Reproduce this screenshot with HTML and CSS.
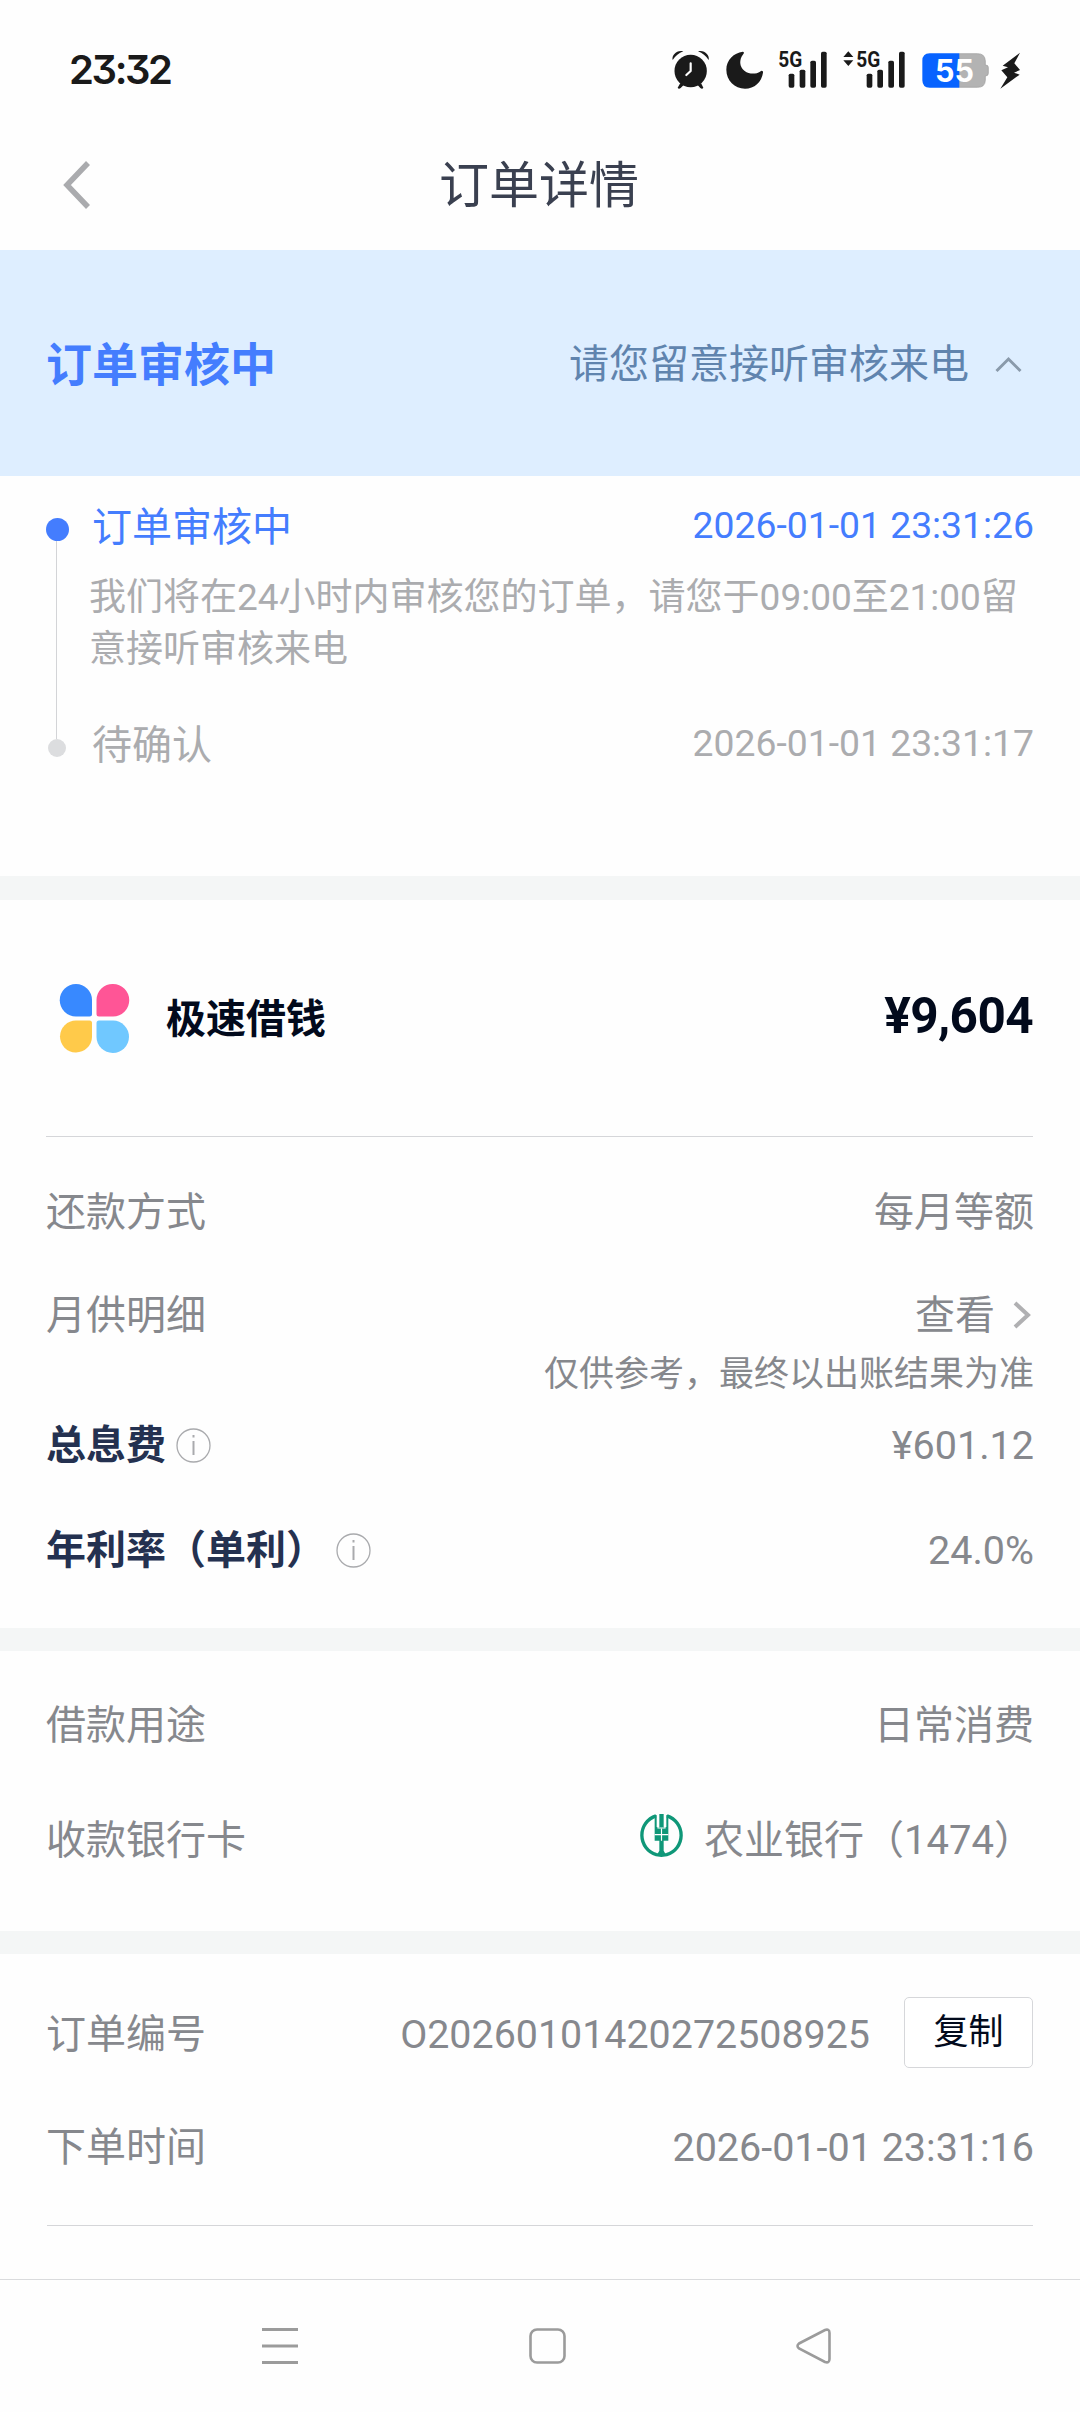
FILE: index.html
```html
<!DOCTYPE html>
<html lang="zh-CN">
<head>
<meta charset="utf-8">
<title>订单详情</title>
<link rel="stylesheet" href="styles.css">
</head>
<body>
<div class="screen">
  <div class="statusbar">
    <span class="clock">23:32</span>
    <div class="status-icons">
      <svg class="ic-alarm" width="38" height="39" viewBox="96 61 114 117">
        <g fill="#1a1a1a">
          <path d="M98 91C94 76 112 59 130 65Q110 73 98 91Z"/>
          <path d="M206 91C210 76 192 59 174 65Q194 73 206 91Z"/>
          <circle cx="152" cy="124" r="48.500"/>
          <path d="M121 160L113 174Q116 180 122 175L131 166ZM183 160L190 174Q187 180 181 175L173 166Z"/>
        </g>
        <path d="M152 101V124L139 136" fill="none" stroke="#fff" stroke-width="6.500" stroke-linecap="round" stroke-linejoin="round"/>
      </svg>
      <svg class="ic-moon" width="38" height="39" viewBox="259 61 114 117">
        <path d="M309 66C283 69 260 91 260 120C260 152 285 177 316 177C344 177 366 157 370 129C371 123 366 121 361 126C351 133 329 135 315 124C298 111 299 90 309 76C314 70 314 66 309 66Z" fill="#1a1a1a"/>
      </svg>
      <svg class="ic-signal" width="48" height="39" viewBox="417 61 144 117">
        <text class="net" x="415" y="111" textLength="72" lengthAdjust="spacingAndGlyphs">5G</text>
        <g fill="#1a1a1a"><rect x="446" y="132" width="17" height="42" rx="5"/><rect x="479" y="120" width="17" height="54" rx="5"/><rect x="511" y="93" width="17" height="81" rx="5"/><rect x="543" y="66" width="17" height="108" rx="5"/></g>
      </svg>
      <svg class="ic-signal2" width="62" height="39" viewBox="609 61 186 117">
        <path d="M625 65L640 82H610ZM625 109L640 92H610Z" fill="#1a1a1a"/>
        <text class="net" x="649" y="111" textLength="72" lengthAdjust="spacingAndGlyphs">5G</text>
        <g fill="#1a1a1a"><rect x="680" y="132" width="17" height="42" rx="5"/><rect x="712" y="120" width="17" height="54" rx="5"/><rect x="745" y="93" width="17" height="81" rx="5"/><rect x="777" y="66" width="17" height="108" rx="5"/></g>
      </svg>
      <svg class="ic-battery" width="67" height="39" viewBox="845 61 201 117">
        <path d="M957 72H1012Q1034 72 1035 94V106Q1044 106 1044 113V131Q1044 139 1035 139V152Q1034 173 1012 173H957Z" fill="#b3b3b3" stroke="#9c9c9c" stroke-width="2"/>
        <path d="M957 71H868Q846 71 846 94V151Q846 174 868 174H957Z" fill="#0763ff"/>
        <text class="level" x="884" y="158" textLength="117" lengthAdjust="spacingAndGlyphs">55</text>
      </svg>
      <svg class="ic-bolt" width="21" height="39" viewBox="1079 61 63 117">
        <path d="M1139 69L1087 108L1103 113L1083 122L1101 143L1080 177L1138 135L1121 129L1139 121L1122 101Z" fill="#1a1a1a"/>
      </svg>
    </div>
  </div>

  <header class="navbar">
    <svg class="back" width="28" height="48" viewBox="0 0 28 48"><path d="M25 2L4 24L25 46" fill="none" stroke="#aaabae" stroke-width="5.500"/></svg>
    <h1 class="title">订单详情</h1>
  </header>

  <section class="banner">
    <strong class="banner-state">订单审核中</strong>
    <span class="banner-tip">请您留意接听审核来电</span>
    <svg class="banner-arrow" width="27" height="17" viewBox="0 0 27 17"><path d="M1.500 15L13.500 3L25.500 15" fill="none" stroke="#8a9aab" stroke-width="3"/></svg>
  </section>

  <section class="timeline">
    <div class="rail"><i class="dot dot-on"></i><i class="rail-line"></i><i class="dot dot-off"></i></div>
    <div class="steps">
      <div class="step step-on"><span>订单审核中</span><time>2026-01-01 23:31:26</time></div>
      <p class="step-desc">我们将在24小时内审核您的订单，请您于09:00至21:00留意接听审核来电</p>
      <div class="step"><span>待确认</span><time>2026-01-01 23:31:17</time></div>
    </div>
  </section>

  <section class="card loan">
    <div class="product">
      <svg class="logo" width="69" height="69" viewBox="0 0 69 69">
        <path d="M16 0A16 16 0 0 1 32 16V30Q32 32.500 29.500 32.500H16A16.250 16.250 0 0 1 16 0Z" fill="#3889ff"/>
        <path d="M53 0A16.250 16.250 0 0 1 53 32.500H39Q36.500 32.500 36.500 30V16A16 16 0 0 1 53 0Z" fill="#ff5596"/>
        <path d="M16 36.500H29.500Q32 36.500 32 39V53A16 16 0 1 1 16 36.500Z" fill="#ffca4a"/>
        <path d="M39 36.500H53A16.250 16.250 0 1 1 36.500 53V39Q36.500 36.500 39 36.500Z" fill="#70c8ff"/>
      </svg>
      <strong class="product-name">极速借钱</strong>
      <strong class="amount">¥9,604</strong>
    </div>
    <div class="rows">
      <div class="row r1"><span>还款方式</span><span>每月等额</span></div>
      <div class="row r2"><span>月供明细</span><span class="more">查看<svg width="18" height="28" viewBox="0 0 18 28"><path d="M2 2L15 14L2 26" fill="none" stroke="#b0b0b2" stroke-width="4"/></svg></span></div>
      <div class="note">仅供参考，最终以出账结果为准</div>
      <div class="row r3"><span class="key">总息费<svg width="35" height="35" viewBox="0 0 35 35"><circle cx="17.500" cy="17.500" r="16.500" fill="none" stroke="#a9aaad" stroke-width="1.300"/><path d="M17.500 7V9.500M17.500 13V27" stroke="#a9aaad" stroke-width="2"/></svg></span><span class="num">¥601.12</span></div>
      <div class="row r4"><span class="key">年利率（单利）<svg width="35" height="35" viewBox="0 0 35 35"><circle cx="17.500" cy="17.500" r="16.500" fill="none" stroke="#a9aaad" stroke-width="1.300"/><path d="M17.500 7V9.500M17.500 13V27" stroke="#a9aaad" stroke-width="2"/></svg></span><span class="num">24.0%</span></div>
    </div>
  </section>

  <section class="card payee">
    <div class="row"><span>借款用途</span><span>日常消费</span></div>
    <div class="row bank-row"><span>收款银行卡</span>
      <span class="bank">
        <svg class="bank-logo" width="43" height="43" viewBox="0 0 129 129">
          <path d="M48 5.500A61 61 0 0 0 49 122L64 124L80 122A61 61 0 0 0 81 5.500" fill="none" stroke="#0f9778" stroke-width="10"/>
          <path d="M44 3H50V39H58V0H71V39H79V3H85V80H71V110L78 122H51L58 110V80H44Z" fill="#0f9778"/>
          <path d="M54 0V42H75V0M44 62H85M64.500 44V80" fill="none" stroke="#fff" stroke-width="3.500"/>
        </svg>农业银行（1474）</span></div>
  </section>

  <section class="card order">
    <div class="row id-row"><span>订单编号</span><span class="order-id">O20260101420272508925</span><button class="copy">复制</button></div>
    <div class="row time-row"><span>下单时间</span><span class="num">2026-01-01 23:31:16</span></div>
    <hr class="rule">
  </section>

  <nav class="sysnav">
    <svg width="36" height="38" viewBox="0 0 36 38"><path d="M0 2.500H36M0 19H36M0 35.500H36" stroke="#9b9b9b" stroke-width="3"/></svg>
    <svg width="38" height="38" viewBox="0 0 38 38"><rect x="2.500" y="2.500" width="34" height="33" rx="6.500" fill="none" stroke="#9b9b9b" stroke-width="2.600"/></svg>
    <svg width="36" height="38" viewBox="0 0 36 38"><path d="M3 16.500L29 3Q33.500 1.500 33.500 6V32Q33.500 36.500 29 35L3 21.500Q0 19 3 16.500Z" fill="none" stroke="#9b9b9b" stroke-width="2.600"/></svg>
  </nav>
</div>
</body>
</html>
```
FILE: styles.css
```css
* { box-sizing: border-box; }
body {
  margin: 0;
  background: #fefefe;
  font-family: Roboto, "Noto Sans CJK SC", sans-serif;
  font-size: 40px;
  color: #86888d;
}
svg { display: block; flex: none; overflow: visible; }
.screen {
  width: 1080px;
  height: 2412px;
  overflow: hidden;
  display: flex;
  flex-direction: column;
}
.screen > * { flex: none; }

/* Status bar */
.statusbar {
  height: 120px;
  padding: 19px 59px 0 69px;
  display: flex;
  justify-content: space-between;
  align-items: center;
}
.clock {
  font-family: Inter, sans-serif;
  font-size: 40px;
  font-weight: 600;
  line-height: 48px;
  letter-spacing: -2.4px;
  font-feature-settings: "cv09";
  color: #1a1a1a;
}
.status-icons { display: flex; align-items: center; }
.ic-moon { margin-left: 16px; }
.ic-signal { margin-left: 15px; }
.ic-signal2 { margin-left: 16px; }
.ic-battery { margin-left: 17px; }
.ic-bolt { margin-left: 11px; }
.net { font: 700 68px Roboto, sans-serif; fill: #1a1a1a; }
.level { font: 700 92px Inter, sans-serif; fill: #fff; }

/* Page header */
.navbar {
  height: 130px;
  padding: 2px 65px 0 63px;
  display: grid;
  grid-template-columns: 28px 1fr 28px;
  align-items: center;
}
.back { margin-bottom: 2px; }
.title {
  margin: 0;
  font-size: 50px;
  font-weight: 400;
  line-height: 60px;
  text-align: center;
  color: #3a4050;
}

/* Review banner */
.banner {
  height: 226px;
  padding: 0 58px 4px 46px;
  background: #deeeff;
  display: flex;
  align-items: center;
}
.banner-state { font-size: 46px; font-weight: 700; color: #447dfe; margin-right: auto; }
.banner-tip { color: #6084ae; margin-right: 26px; }
.banner-arrow { margin-top: 7px; }

/* Progress */
.timeline {
  height: 424px;
  padding: 26px 46px 0 46px;
  display: flex;
  border-bottom: 24px solid #f4f6f6;
}
.rail {
  width: 23px;
  height: 239px;
  margin-top: 16px;
  display: flex;
  flex-direction: column;
  align-items: center;
}
.dot { border-radius: 50%; flex: none; }
.dot-on { width: 23px; height: 23px; background: #447dfe; }
.dot-off { width: 18px; height: 18px; background: #dcdddf; margin-right: 2px; }
.rail-line { width: 1px; flex: 1; background: #d3d4d7; margin-right: 2px; }
.steps { flex: 1; margin-left: 20px; }
.step {
  display: flex;
  justify-content: space-between;
  padding-left: 3px;
  line-height: 52px;
  color: #abacaf;
}
.step time { font-size: 37.3px; line-height: 47px; }
.step-on { color: #447dfe; }
.step-desc {
  margin: 18px 0 44px;
  font-size: 37px;
  line-height: 52px;
  color: #abacaf;
}

/* Cards */
.card { padding: 0 46px; }
.row {
  display: flex;
  justify-content: space-between;
  align-items: center;
  line-height: 52px;
}
.loan { height: 751px; border-bottom: 23px solid #f4f6f6; }
.product {
  height: 237px;
  padding-left: 14px;
  display: flex;
  align-items: center;
  border-bottom: 1px solid #d5d6d9;
  margin-right: 1px;
  color: #020a1c;
}
.product-name { margin: 0 auto 4px 37px; }
.amount { margin-bottom: 5px; font-size: 49.5px; font-weight: 700; letter-spacing: -0.6px; }
.r1 { margin-top: 50px; }
.r2 { margin-top: 51px; }
.more { display: flex; align-items: center; gap: 18px; padding-right: 3px; }
.more svg { margin-bottom: 2px; }
.note { margin-top: 13px; font-size: 35px; line-height: 40px; text-align: right; }
.r3 { margin-top: 25px; }
.r4 { margin-top: 53px; }
.key { display: flex; align-items: center; gap: 10px; font-weight: 700; color: #243150; }
.key svg { margin-bottom: 2px; }
.num { font-size: 39.5px; }

.payee { height: 303px; padding-top: 49px; border-bottom: 23px solid #f4f6f6; }
.bank-row { margin-top: 62px; }
.bank { display: flex; align-items: center; gap: 21px; }
.bank-logo { margin-bottom: 11px; }

.order { height: 325px; padding-top: 43px; }
.id-row { height: 71px; }
.id-row > span { padding-top: 5px; }
.order-id { margin-left: auto; margin-right: 34px; font-size: 39.4px; }
.copy {
  width: 129px;
  height: 71px;
  padding: 0;
  margin-right: 1px;
  border: 1px solid #d6d7da;
  border-radius: 5px;
  background: #fff;
  font: 400 35px/68px Roboto, "Noto Sans CJK SC", sans-serif;
  color: #020a1c;
}
.time-row { margin-top: 54px; }
.rule { margin: 51px 1px 0; border: 0; height: 1px; background: #d5d6d9; }

/* System navigation */
.sysnav {
  height: 133px;
  padding: 47px 248px 0 262px;
  border-top: 1px solid #dadbdd;
  display: flex;
  justify-content: space-between;
}
```
